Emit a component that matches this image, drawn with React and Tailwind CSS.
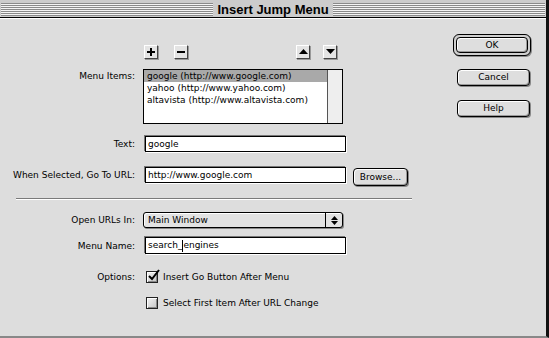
import React from 'react';

const font = { fontFamily: '"DejaVu Sans", Verdana, sans-serif' };

const Stripes = () => (
    <div className="flex-1 h-[13px] bg-[repeating-linear-gradient(to_bottom,#8a8a8a_0px,#8a8a8a_1px,#f4f4f4_1px,#f4f4f4_2px)]" />
);

const TitleBar = () => (
    <div className="h-[18px] bg-[#cccccc] border-b border-black flex items-center px-[1px] pt-[1px]">
        <Stripes />
        <span
            className="px-[4px] text-[13px] font-bold leading-[13px] text-black"
            style={{ fontFamily: '"Liberation Sans", Arial, sans-serif' }}
        >
            Insert Jump Menu
        </span>
        <Stripes />
    </div>
);

const Bevel = ({ children, className = '' }) => (
    <div
        className={`w-[14px] h-[14px] bg-[#e4e4e4] border border-t-white border-l-white border-r-[#444] border-b-[#444] shadow-[1px_1px_0_#999] flex items-center justify-center ${className}`}
    >
        {children}
    </div>
);

const PushButton = ({ children, className = '' }) => (
    <div
        className={`flex items-center justify-center rounded-[4px] border border-black bg-[#dedede] shadow-[inset_1px_1px_0_#ffffff,inset_-1px_-1px_0_#9a9a9a,1px_1px_0_#888] text-[9px] leading-none text-black ${className}`}
    >
        {children}
    </div>
);

const Field = ({ children, className = '' }) => (
    <div
        className={`h-[16px] bg-white border border-black shadow-[-1px_-1px_0_#777,1px_1px_0_#ffffff] flex items-center px-[2px] text-[9px] leading-none text-black whitespace-nowrap ${className}`}
    >
        {children}
    </div>
);

const Label = ({ children, className = '' }) => (
    <div className={`w-[136px] shrink-0 text-right pr-[1px] text-[9px] leading-[12px] text-black ${className}`}>
        {children}
    </div>
);

const Checkbox = ({ checked }) => (
    <div className="relative w-[12px] h-[12px] shrink-0 border border-[#222] bg-[linear-gradient(135deg,#f4f4f4_0%,#c4c4c4_100%)] shadow-[inset_1px_1px_0_#ffffff,inset_-1px_-1px_0_#888]">
        {checked && (
            <svg width="13" height="13" viewBox="0 0 13 13" className="absolute left-[0px] top-[-3px]">
                <path d="M2 7 L5 10 L12 1" fill="none" stroke="#000" strokeWidth="2" />
            </svg>
        )}
    </div>
);

export default function App() {
    const items = [
        'google (http://www.google.com)',
        'yahoo (http://www.yahoo.com)',
        'altavista (http://www.altavista.com)',
    ];

    return (
        <div
            className="w-[549px] h-[338px] bg-[#dddddd] border-r-[3px] border-r-[#111] border-b-2 border-b-[#888] flex flex-col overflow-hidden"
            style={font}
        >
            <TitleBar />
            <div className="flex flex-1 border-t border-white">
                {/* left form */}
                <div className="w-[453px] shrink-0 flex flex-col">
                    <div className="mt-[26px] flex pl-[144px]">
                        <Bevel>
                            <svg width="8" height="8" viewBox="0 0 8 8">
                                <rect x="3" y="0" width="2" height="8" fill="#000" />
                                <rect x="0" y="3" width="8" height="2" fill="#000" />
                            </svg>
                        </Bevel>
                        <Bevel className="ml-[16px]">
                            <svg width="8" height="8" viewBox="0 0 8 8">
                                <rect x="0" y="3" width="8" height="2" fill="#000" />
                            </svg>
                        </Bevel>
                        <Bevel className="ml-[108px]">
                            <svg width="9" height="6" viewBox="0 0 9 6">
                                <polygon points="4.5,0 9,5 0,5" fill="#000" />
                            </svg>
                        </Bevel>
                        <Bevel className="ml-[13px]">
                            <svg width="9" height="6" viewBox="0 0 9 6">
                                <polygon points="0,0 9,0 4.5,5" fill="#000" />
                            </svg>
                        </Bevel>
                    </div>

                    <div className="mt-[10px] flex items-start">
                        <Label className="pt-[1px]">Menu Items:</Label>
                        <div className="ml-[7px] w-[200px] h-[55px] border border-black bg-white flex">
                            <div className="flex-1 flex flex-col">
                                {items.map((item, i) => (
                                    <div
                                        key={item}
                                        className={`h-[12px] px-[3px] text-[9px] leading-[12px] text-black whitespace-nowrap ${
                                            i === 0 ? 'bg-[#a9a9a9]' : ''
                                        }`}
                                    >
                                        {item}
                                    </div>
                                ))}
                            </div>
                            <div className="w-[15px] border-l border-[#555] bg-[#eeeeee]" />
                        </div>
                    </div>

                    <div className="mt-[12px] flex items-center">
                        <Label>Text:</Label>
                        <Field className="ml-[9px] w-[201px]">google</Field>
                    </div>

                    <div className="mt-[15px] flex items-start">
                        <Label className="pt-[2px]">When Selected, Go To URL:</Label>
                        <Field className="ml-[9px] w-[201px]">http://www.google.com</Field>
                        <PushButton className="ml-[7px] mt-[1px] w-[55px] h-[18px]">Browse...</PushButton>
                    </div>

                    <div className="mt-[12px] ml-[16px] w-[396px] h-[2px] border-t border-[#7a7a7a] border-b border-b-white" />

                    <div className="mt-[12px] flex items-center">
                        <Label>Open URLs In:</Label>
                        <div className="ml-[7px] w-[200px] h-[16px] rounded-[3px] border border-black bg-[#e2e2e2] shadow-[inset_1px_1px_0_#ffffff,1px_1px_0_#888] flex items-center">
                            <span className="flex-1 px-[4px] text-[9px] leading-none text-black">Main Window</span>
                            <div className="w-[17px] h-full border-l border-black flex flex-col items-center justify-center gap-[1px]">
                                <svg width="7" height="4" viewBox="0 0 7 4">
                                    <polygon points="3.5,0 7,4 0,4" fill="#000" />
                                </svg>
                                <svg width="7" height="4" viewBox="0 0 7 4">
                                    <polygon points="0,0 7,0 3.5,4" fill="#000" />
                                </svg>
                            </div>
                        </div>
                    </div>

                    <div className="mt-[9px] flex items-center">
                        <Label>Menu Name:</Label>
                        <Field className="ml-[9px] w-[201px] h-[17px] shadow-[-1px_-1px_0_#777,1px_1px_0_#777]">
                            search_
                            <span className="inline-block w-[1px] h-[12px] bg-black" />
                            engines
                        </Field>
                    </div>

                    <div className="mt-[17px] flex items-center">
                        <Label>Options:</Label>
                        <div className="ml-[10px] flex items-center gap-[5px]">
                            <Checkbox checked />
                            <span className="text-[9px] leading-none text-black">Insert Go Button After Menu</span>
                        </div>
                    </div>

                    <div className="mt-[14px] flex items-center pl-[146px] gap-[5px]">
                        <Checkbox />
                        <span className="text-[9px] leading-none text-black">Select First Item After URL Change</span>
                    </div>
                </div>

                {/* right buttons */}
                <div className="flex flex-col">
                    <div className="mt-[15px] w-[78px] h-[22px] rounded-[6px] border border-black bg-[#cfcfcf] p-[2px] shadow-[1px_1px_0_#888]">
                        <PushButton className="w-full h-full shadow-[inset_1px_1px_0_#ffffff,inset_-1px_-1px_0_#9a9a9a]">OK</PushButton>
                    </div>
                    <PushButton className="mt-[13px] ml-[4px] w-[73px] h-[17px]">Cancel</PushButton>
                    <PushButton className="mt-[14px] ml-[4px] w-[73px] h-[17px]">Help</PushButton>
                </div>
            </div>
        </div>
    );
}
